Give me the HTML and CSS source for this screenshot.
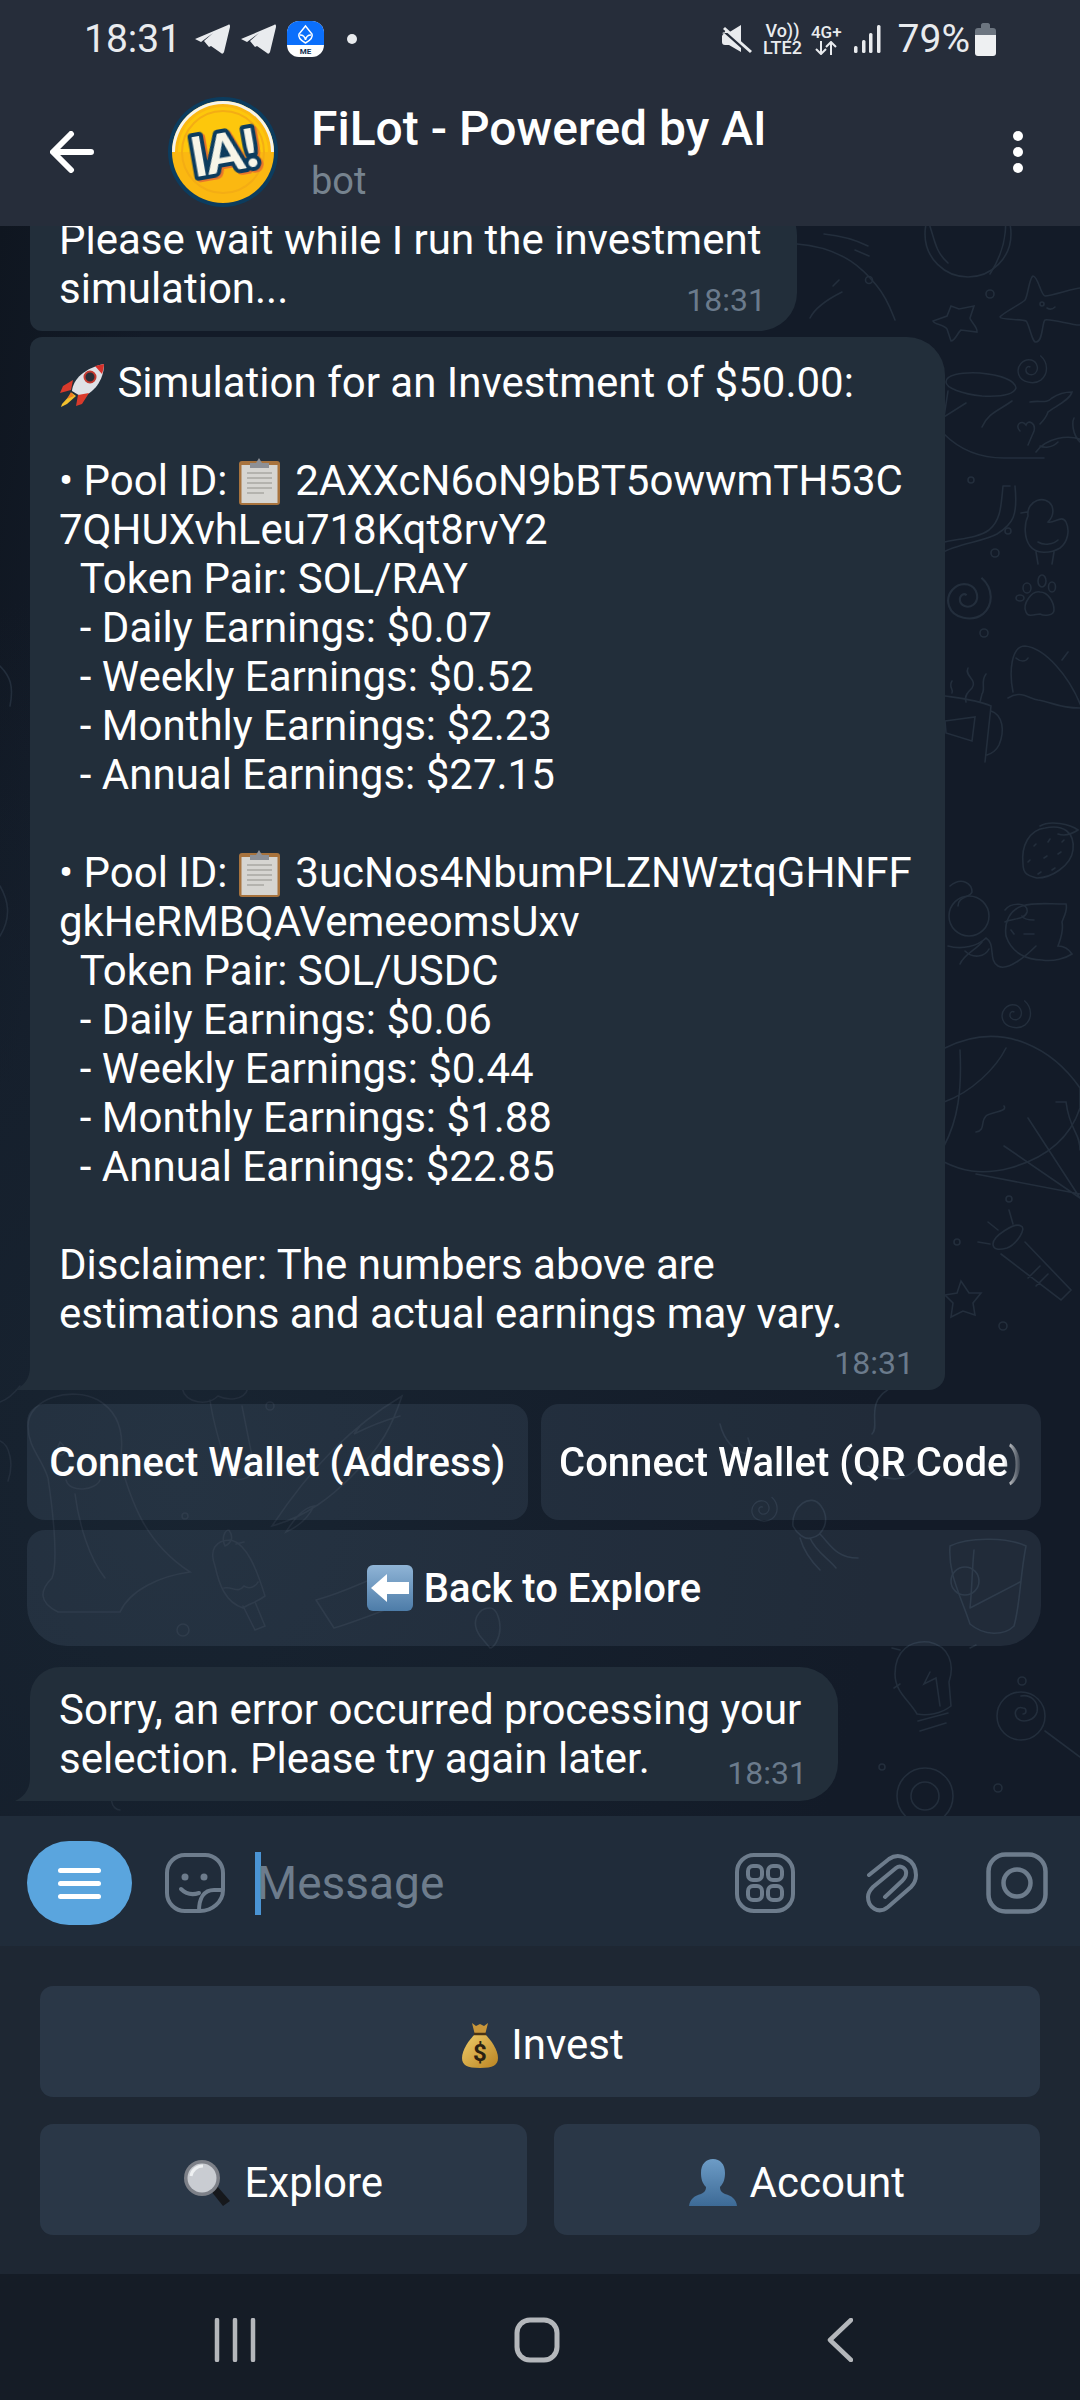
FILE: index.html
```html
<!DOCTYPE html>
<html lang="en">
<head>
    <meta charset="UTF-8">
    <meta name="viewport" content="width=device-width, initial-scale=1.0">
    <title>FiLot - Powered by AI</title>
    <link rel="stylesheet" href="styles.css">
</head>
<body>

    <!-- shared pictures -->
    <svg class="defs" width="0" height="0" aria-hidden="true">
        <defs>
            <linearGradient id="blue-key" x1="0" y1="0" x2="0" y2="1">
                <stop offset="0" stop-color="#8fb4d6"/>
                <stop offset="1" stop-color="#4d7ca8"/>
            </linearGradient>
            <linearGradient id="bust" x1="0" y1="0" x2="0" y2="1">
                <stop offset="0" stop-color="#6d9cc6"/>
                <stop offset="1" stop-color="#3d6a96"/>
            </linearGradient>
            <linearGradient id="bag" x1="0" y1="0" x2="1" y2="1">
                <stop offset="0" stop-color="#f0cd6a"/>
                <stop offset="1" stop-color="#b98322"/>
            </linearGradient>
            <symbol id="clipboard" viewBox="0 0 43 48">
                <rect x="1" y="4" width="41" height="44" rx="3" fill="#a8733d"/>
                <rect x="3.500" y="8" width="36" height="38" fill="#d6d5d1"/>
                <path d="M9 16h25M9 21h25M9 26h25M9 31h25M9 36h17" stroke="#a9a8a3" stroke-width="1.5"/>
                <path d="M12 11V6h6l3-5 3 5h7v5z" fill="#8d9096"/>
            </symbol>
            <symbol id="spiral" viewBox="0 0 40 40">
                <path d="M27 5c9 8 9 20 1 27-8 6-22 3-25-6-3-9 5-18 14-16 7 2 9 11 4 15-4 3-10 1-10-4 0-3 3-5 5-3" fill="none" stroke="currentColor" stroke-width="1.6"/>
            </symbol>
        </defs>
    </svg>

    <header class="top-bar">
        <div class="status-bar">
            <div class="status-left">
                <span class="clock">18:31</span>
                <svg class="plane" viewBox="0 0 35 30"><path d="M0 15 33 1c2-1 2 0 2 2l-6 25c-1 2-2 2-3 1l-10-7-2 1-5-6 9-8-12 9z" fill="#e9ebee"/></svg>
                <svg class="plane" viewBox="0 0 35 30"><path d="M0 15 33 1c2-1 2 0 2 2l-6 25c-1 2-2 2-3 1l-10-7-2 1-5-6 9-8-12 9z" fill="#e9ebee"/></svg>
                <svg class="app-badge" viewBox="0 0 37 36">
                    <rect width="37" height="36" rx="12" fill="#fff"/>
                    <path d="M0 24V12A12 12 0 0 1 12 0h13a12 12 0 0 1 12 12v12z" fill="#0b6ffb"/>
                    <path d="M18.500 5 25 13c1 3-1 6-6.500 9C13 19 11 16 12 13zM13 14c3 0 5 2 5.500 5 .5-3 2.500-5 5.500-5" fill="none" stroke="#fff" stroke-width="1.500"/>
                    <text x="18.500" y="33" class="badge-text">ME</text>
                </svg>
                <span class="status-dot"></span>
            </div>
            <div class="status-right">
                <svg class="mute" viewBox="0 0 30 30"><path d="M0 12c0-2 1-3 3-3h3L19 1v19L4 6z M0 12v6c0 2 1 3 3 3h4l12 7v-4L1 8z" fill="#e9ebee"/><path d="M2 4 29 28" stroke="#e9ebee" stroke-width="3"/></svg>
                <div class="net-text">
                    <span>Vo))</span>
                    <span>LTE2</span>
                </div>
                <div class="net-text net-small">
                    <span>4G+</span>
                    <svg class="arrows" viewBox="0 0 24 14"><path d="M7 0v13M2 8l5 5 5-5M17 14V1M12 6l5-5 5 5" fill="none" stroke="#e9ebee" stroke-width="2"/></svg>
                </div>
                <svg class="signal" viewBox="0 0 27 28">
                    <rect x="0" y="21" width="3.500" height="7" rx="1.500" fill="#e9ebee"/>
                    <rect x="8" y="15" width="3.500" height="13" rx="1.500" fill="#e9ebee"/>
                    <rect x="15" y="8" width="3.500" height="20" rx="1.500" fill="#e9ebee"/>
                    <rect x="23" y="0" width="3.500" height="28" rx="1.500" fill="#e9ebee"/>
                </svg>
                <span class="battery-text">79%</span>
                <svg class="battery" viewBox="0 0 21 33">
                    <path d="M0 13V8c0-2 1-3 3-3h3V2c0-1 1-2 2-2h5c1 0 2 1 2 2v3h3c2 0 3 1 3 3v5z" fill="#6c7580"/>
                    <path d="M0 12h21v18c0 2-1 3-3 3H3c-2 0-3-1-3-3z" fill="#eef0f2"/>
                </svg>
            </div>
        </div>
        <div class="toolbar">
            <svg class="back-arrow" viewBox="0 0 44 42"><path d="M41 21H4M21 3 3 21l18 18" fill="none" stroke="#fff" stroke-width="6" stroke-linecap="round" stroke-linejoin="round"/></svg>
            <svg class="avatar" viewBox="0 0 110 110">
                <circle cx="55" cy="55" r="55" fill="#0c3c5e"/>
                <circle cx="55" cy="55" r="51" fill="#fbb811"/>
                <path d="M4 55a51 51 0 0 1 102 0h-3a48 48 0 0 0-96 0z" fill="#f6f4ea"/>
                <path d="M10 55a45 45 0 0 1 90 0z" fill="#fdc70c"/>
                <circle cx="55" cy="55" r="41" fill="none" stroke="#f4ad14" stroke-width="2"/>
                <text x="57" y="75" class="avatar-text" transform="rotate(-10 55 55)">lA!</text>
            </svg>
            <div class="chat-title">
                <span class="chat-name">FiLot - Powered by AI</span>
                <span class="chat-sub">bot</span>
            </div>
            <div class="more-dots"><span></span><span></span><span></span></div>
        </div>
    </header>

    <main class="chat">
        <!-- wallpaper doodles, y is relative to the chat area -->
        <svg class="doodles" viewBox="0 0 1080 1590" aria-hidden="true">
            <g fill="none" stroke="currentColor" stroke-width="1.600" stroke-linecap="round">
                <!-- top right -->
                <circle cx="968" cy="8" r="43"/>
                <path d="M928 -5c6 14 6 30 20 42M998 -30c12 20 10 50-8 78"/>
                <path d="M797 18c50 4 70 30 80 42 10 12 14 24 18 34M824 8c20 2 32 6 44 12M855 24l14 6M810 92c6-12 20-20 32-26M833 60l6-6"/>
                <circle cx="869" cy="54" r="3.500"/><circle cx="990" cy="68" r="4"/>
                <path d="M1033 50c5 0 8 20 12 20 6 0 30-8 35-8M1033 50c-4 2-5 20-8 24-4 4-24 14-25 17 0 3 22 2 26 4 3 2 6 22 10 21 7 0 6-20 9-22 4-2 30 6 35 5"/>
                <circle cx="1042" cy="78" r="2"/><path d="M1047 82c3 2 6 1 8-1"/>
                <path d="M951 80l-4 10-14 5c0 3 12 4 14 8l4 12c4 0 7-9 10-11l16 2c1-5-7-11-7-14l4-12-15 3z"/>
                <!-- bowl and crab -->
                <path d="M946 156c0 6 16 12 36 14 20 1 32-2 34-8-1-8-16-13-36-15-20-1-34 2-34 9zM948 165l-4 26 22-14M1012 175c-14 10-24 12-30 26M944 208c14 14 34 24 60 24h40M1030 176c10-2 16 2 22-4 6-4 12-6 20-6-2 8-16 14-24 20-2 6-6 10-8 12"/>
                <path d="M1036 226c10-14 32-18 46-12M1020 205c-6-6 2-12 6-6 2-6 10-2 8 6l-6 14M1080 216c-8-8-8-20-6-24"/>
                <path d="M1040 220c4 2 12 2 18-4"/>
                <circle cx="971" cy="254" r="3"/><circle cx="1008" cy="305" r="3"/><circle cx="995" cy="327" r="4"/>
                <path d="M1003 260c-2 20-2 34-14 44-14 10-36 8-60 16M1010 260h-7M1015 260c3 30-2 38-18 48-14 8-44 10-60 22"/>
                <!-- duck -->
                <path d="M1028 290c-2-16 18-22 24-10 2 6 0 12-4 16 6 2 14-8 18 0 4 8 2 20-6 26-10 6-24 6-30-2-6-8-6-22-2-30zM1027 286l-6 1M1038 316c6 4 16 2 20-2M1036 326l2 12M1054 326l-2 12"/>
                <!-- paw -->
                <path d="M1026 386c-4-8 6-22 14-20 8 0 14 10 14 18 0 6-10 6-14 4-4 0-12 4-14-2z"/>
                <ellipse cx="1027" cy="362" rx="4" ry="5"/><ellipse cx="1042" cy="355" rx="4" ry="6"/><ellipse cx="1052" cy="361" rx="3.500" ry="5"/><ellipse cx="1020" cy="372" rx="4" ry="3"/>
                <circle cx="984" cy="407" r="4"/>
                <!-- whale -->
                <path d="M1013 466c-4-20-2-46 12-46 20 2 44 30 56 60M1008 472c12-8 20 0 30 2 14 2 20 8 42 8M1016 432c4 4 10 4 12 0M1062 434l6-8"/>
                <!-- steam and mug -->
                <path d="M968 442c-4 8 10 12 4 20-4 4-8 8-6 14M986 448c-6 8 0 14-4 20l-2 8M952 455c-4 6 2 8 0 12"/>
                <path d="M945 470c14 2 32 4 46 10l-6 56M991 485c12 4 14 20 8 34-2 4-6 8-12 10M945 495l30-4-3 24-26-8z"/>
                <!-- strawberry -->
                <path d="M1045 602c18-4 30 4 28 22-2 16-22 28-36 28-6-2-14-2-14-14-2-18 6-34 22-36zM1040 600c10-6 30-2 38 4-6 4-14 6-20 4"/>
                <path d="M1034 620l2-2M1048 616l2-3M1062 616l2-2M1028 636l2-2M1044 632l3-2M1058 628l3-2M1038 648l3-2M1052 644l3-2"/>
                <!-- cat -->
                <path d="M950 660c12-10 22-2 22 6-2 6-14 4-14 14M948 720c14 4 30 0 38-8 10 6 2 22 12 28 10 6 30-12 38-20M1006 710c-2-14 4-26 16-30 14-4 24-2 44-2 2 6-2 12-4 18 2 10-2 18-4 24 4 0 10 2 14 8-6 4-18 8-30 6-14 0-30-6-36-24z"/>
                <circle cx="969" cy="690" r="20"/>
                <path d="M1005 684c6-8 24-8 22 2-2 8-14 6-22 10M960 738c4-10 16-14 22-22M965 725c8 8 20 6 24-2"/>
                <path d="M1014 708l-3-4M1022 690c2 4 8 4 12 4M1024 708h10"/>
                <!-- balloon -->
                <path d="M945 822c60-30 110 4 135 40v20c-10 30-34 50-70 60-30 8-50 2-66-6"/>
                <path d="M960 824c2 40-2 70-16 96M1006 822c-10 20-34 44-62 54M1004 880c4 6-14 6-18 10-6 6 0 14-10 16M1056 876l10 0c4 30 14 30 14 48M1028 892l52 80M1004 920l76 52M976 948l104 20"/>
                <!-- telescope -->
                <path d="M993 1018c0-8 22-22 28-18 6 2-4 18-14 22-8 2-14 2-14-4zM1001 1028l60 46 10-10-46-48M1040 1040l-12 12M1048 1048l-12 12"/>
                <path d="M1009 984l4 14M988 996l10 8M978 1016l12 2"/>
                <circle cx="1009" cy="973" r="3"/><circle cx="957" cy="1016" r="3"/>
                <path d="M961 1055l-4 12-12 2 8 8-2 14 12-6 12 4-2-12 8-10-12 0z"/>
                <circle cx="1003" cy="1100" r="4"/>
                <!-- dino, behind the first wallet button -->
                <path d="M28 1200c0-28 44-40 70-26 24 14 26 40 22 62 12 40 24 80 70 110-30 4-60 18-70 40-20 0-40 0-62 0-20-10-18-22-6-34 6-14 2-60-4-100-6-20-20-30-20-52zM60 1216c10 8 2 18-4 10zM100 1254c-4 10-30 14-34 0M75 1268c4 30 14 64 30 84"/>
                <path d="M182 1162c-6-16 20-24 28-10 14-14 40-4 38 10-4 14-22 12-30 8-10 10-32 8-36-8zM210 1174c4 30 16 62 20 76 10 8 26 0 24-10l-12-60"/>
                <path d="M272 1300c40-60 80-100 130-130-10 30-20 50-50 80-20 20-44 40-80 50zM286 1306c10-16 18-24 28-26-6 12-14 20-28 26zM360 1200l-6 8c16-8 32-14 46-18"/>
                <!-- popsicle and envelope -->
                <path d="M215 1340c-6-16 0-26 16-26 16 4 26 30 34 56-8 6-16 8-22 12-18-6-24-24-28-42zM243 1380l12 24 10-4-10-24M224 1362c8-2 14 6 20-2 6 4 12 0 14-4"/>
                <path d="M316 1374c30-8 50-20 70-26M316 1374l18 28c20-6 40-14 56-20"/>
                <path d="M225 1320c-4-8 0-16 4-16 4 6 4 12-4 16zM236 1318l8-2M480 1410c-10-14-2-28 10-28 6 0 10 10 10 20 0 10-6 20-10 20z"/>
                <circle cx="183" cy="1404" r="6"/><circle cx="185" cy="1290" r="3"/><circle cx="270" cy="1180" r="4"/>
                <!-- right of the buttons -->
                <path d="M793 1300c-2-20 18-34 28-20 10 14 2 30-10 32-6 2-14-4-18-12zM800 1312c4 14 12 24 20 32M810 1312c6 14 18 20 26 30M820 1308c10 10 16 24 38 24"/>
                <path d="M950 1320c20-10 60-8 76 0-6 30-6 60-12 80-10 10-30 10-44-2-10-30-22-50-20-78zM970 1382l50-26M974 1324c-2 20-2 40-4 58"/>
                <circle cx="965" cy="1355" r="14"/>
                <path d="M906 1148c-10 14-26 16-30 30-4 14 2 24-4 30M935 1145c-10 0-16 12-6 18M868 1240c20 20 40 14 50 0"/>
                <path d="M720 1198c4 16 14 28 28 30 4-4 2-10 0-16"/>
                <!-- bulb and lollipop -->
                <path d="M917 1488c-8-14-22-22-22-40 0-24 16-34 34-32 20 4 26 22 20 40l2 24c-10 8-24 10-34 8zM918 1495l30-8M920 1505l26-8M930 1446l-6 12 12-6 4 28"/>
                <path d="M900 1424l-8-2M900 1458l-6 4M970 1422l6-3"/>
                <circle cx="1021" cy="1490" r="24"/>
                <path d="M1021 1470c10-2 18 6 16 16-2 8-14 12-20 6-4-6 0-12 6-10 4 0 4 6 0 6M1045 1505l35 26"/>
                <circle cx="925" cy="1570" r="28"/><circle cx="925" cy="1570" r="14"/>
                <circle cx="1022" cy="1455" r="4"/><circle cx="882" cy="1541" r="3"/><circle cx="998" cy="1562" r="4"/>
                <!-- left edge -->
                <path d="M0 1215c10 4 14 24 8 40M20 1160c-8 10-14 14-20 16M0 660c8 14 12 30 0 50M0 440c10 10 14 20 10 40"/>
                <path d="M120 1560c-14 10-8 24 0 24M50 1490c14 0 22 16 12 26-8 8-16 0-12-6"/>
            </g>
            <use href="#spiral" x="1016" y="125" width="36" height="36"/>
            <use href="#spiral" x="945" y="345" width="54" height="54"/>
            <use href="#spiral" x="1000" y="770" width="36" height="36"/>
            <use href="#spiral" x="750" y="1265" width="32" height="36"/>
            <use href="#spiral" x="40" y="1445" width="30" height="34"/>
        </svg>

        <div class="bubble bubble-wait">
            <p class="msg-text">Please wait while I run the investment
simulation...</p>
            <span class="msg-time">18:31</span>
        </div>

        <div class="bubble bubble-sim has-tail">
            <p class="msg-text"><svg class="emoji rocket" viewBox="0 0 47 44">
                <path d="M13 28C14 16 26 5 45 1c0 17-11 29-22 33z" fill="#dfe1e6"/>
                <path d="M36 3 45 1c0 3-1 7-2 10z" fill="#d6302a"/>
                <circle cx="31" cy="14" r="5.500" fill="#2b2f38" stroke="#c43a30" stroke-width="2"/>
                <path d="M14 17 4 23l-3 7 11-3zM30 30l-7 11-6 2 2-11z" fill="#d93a2b"/>
                <path d="M13 30 3 41l-1 3 6-3 9-8z" fill="#f3c12e"/>
                <path d="M12 29 8 36l7-3z" fill="#ef7d22"/>
            </svg> Simulation for an Investment of $50.00:

• Pool ID: <svg class="emoji clip"><use href="#clipboard"/></svg> 2AXXcN6oN9bBT5owwmTH53C
7QHUXvhLeu718Kqt8rvY2
  Token Pair: SOL/RAY
  - Daily Earnings: $0.07
  - Weekly Earnings: $0.52
  - Monthly Earnings: $2.23
  - Annual Earnings: $27.15

• Pool ID: <svg class="emoji clip"><use href="#clipboard"/></svg> 3ucNos4NbumPLZNWztqGHNFF
gkHeRMBQAVemeeomsUxv
  Token Pair: SOL/USDC
  - Daily Earnings: $0.06
  - Weekly Earnings: $0.44
  - Monthly Earnings: $1.88
  - Annual Earnings: $22.85

Disclaimer: The numbers above are
estimations and actual earnings may vary.</p>
            <span class="msg-time">18:31</span>
        </div>

        <div class="inline-keys">
            <div class="key-row">
                <button class="inline-key">Connect Wallet (Address)</button>
                <button class="inline-key"><span class="fade-label">Connect Wallet (QR Code)</span></button>
            </div>
            <div class="key-row">
                <button class="inline-key key-bottom">
                    <svg class="emoji-key" viewBox="0 0 46 46">
                        <rect width="46" height="46" rx="6" fill="url(#blue-key)"/>
                        <path d="M4 23 20 9v8h22v12H20v8z" fill="#fff"/>
                    </svg>
                    Back to Explore
                </button>
            </div>
        </div>

        <div class="bubble bubble-error has-tail">
            <p class="msg-text">Sorry, an error occurred processing your
selection. Please try again later.</p>
            <span class="msg-time">18:31</span>
        </div>
    </main>

    <section class="composer">
        <button class="menu-pill"><span></span><span></span><span></span></button>
        <svg class="sticker-icon" viewBox="0 0 62 62">
            <path d="M21 3h20a18 18 0 0 1 18 18v17c0 12-11 21-23 21H21A18 18 0 0 1 3 41V21A18 18 0 0 1 21 3zM59 38H50C40 38 35 46 35 59M17 37c5 5 12 6 18 4" fill="none" stroke="#6d7c8c" stroke-width="4" stroke-linecap="round"/>
            <circle cx="21" cy="25" r="3.500" fill="#6d7c8c"/>
            <circle cx="40" cy="25" r="3.500" fill="#6d7c8c"/>
        </svg>
        <div class="msg-input"><span class="caret"></span><span class="placeholder">Message</span></div>
        <svg class="tool-icon" viewBox="0 0 60 60">
            <rect x="2" y="2" width="56" height="56" rx="17" fill="none" stroke="#6d7c8c" stroke-width="4"/>
            <g fill="none" stroke="#6d7c8c" stroke-width="4">
                <rect x="13" y="13" width="14" height="14" rx="5"/>
                <rect x="33" y="13" width="14" height="14" rx="5"/>
                <rect x="13" y="33" width="14" height="14" rx="5"/>
                <rect x="33" y="33" width="14" height="14" rx="5"/>
            </g>
        </svg>
        <svg class="tool-icon clip-icon" viewBox="0 0 52 60">
            <path d="M3 22 23 6C33-1 50 6 50 22c0 6-2 9-5 12L22 54C12 62 2 54 2 44c0-4 2-7 5-10L30 15c5-4 11 1 10 6 0 3-2 5-4 7L19 44" fill="none" stroke="#6d7c8c" stroke-width="4" stroke-linecap="round"/>
        </svg>
        <svg class="tool-icon camera-icon" viewBox="0 0 62 62">
            <rect x="2.500" y="2.500" width="57" height="57" rx="17" fill="none" stroke="#6d7c8c" stroke-width="4.500"/>
            <circle cx="31" cy="31" r="13.500" fill="none" stroke="#6d7c8c" stroke-width="4.500"/>
        </svg>
    </section>

    <section class="keyboard">
        <button class="bot-key key-invest">
            <svg class="emoji-bag" viewBox="0 0 36 46">
                <path d="M10 1l4 3 4-2 4 2 4-3-3 12H13z" fill="#c9963a"/>
                <path d="M13 12h10c6 6 13 16 13 24 0 7-5 10-18 10S0 43 0 36c0-8 7-18 13-24z" fill="url(#bag)"/>
                <path d="M12 12h12" stroke="#4a3414" stroke-width="2.500"/>
                <text x="18" y="39" class="bag-text">$</text>
            </svg>
            Invest
        </button>
        <div class="key-row-bot">
            <button class="bot-key">
                <svg class="emoji-big" viewBox="0 0 48 48">
                    <path d="M28 32 40 47l7-5-13-15z" fill="#16181c"/>
                    <circle cx="19" cy="19" r="18" fill="#7d8088"/>
                    <circle cx="19" cy="19" r="14.500" fill="#c9ccd2"/>
                    <path d="M8 17c1-6 6-10 12-10" fill="none" stroke="#eef0f2" stroke-width="3"/>
                </svg>
                Explore
            </button>
            <button class="bot-key">
                <svg class="emoji-big" viewBox="0 0 48 48">
                    <path d="M0 47c1-7 5-10 12-12 4-2 5-4 5-7-4-4-5-9-5-14C12 5 17 0 24 0s12 5 12 14c0 5-1 10-5 14 0 3 1 5 5 7 7 2 11 5 12 12z" fill="url(#bust)"/>
                </svg>
                Account
            </button>
        </div>
    </section>

    <nav class="nav-bar">
        <svg class="nav-recent" viewBox="0 0 42 44"><path d="M3 2v40M21 2v40M39 2v40" stroke="#b4b7bb" stroke-width="4.500" stroke-linecap="round"/></svg>
        <svg class="nav-home" viewBox="0 0 46 46"><rect x="3" y="3" width="40" height="40" rx="13" fill="none" stroke="#b4b7bb" stroke-width="5"/></svg>
        <svg class="nav-back" viewBox="0 0 26 44"><path d="M24 2 3 22l21 20" fill="none" stroke="#b4b7bb" stroke-width="4.500" stroke-linecap="round" stroke-linejoin="round"/></svg>
    </nav>

</body>
</html>
```

FILE: styles.css
```css
html, body {
    margin: 0;
    height: 100%;
}

body {
    width: 1080px;
    height: 2400px;
    display: flex;
    flex-direction: column;
    overflow: hidden;
    font-family: 'Roboto', sans-serif;
    color: #ffffff;
    background-color: #151c26;
}

p {
    margin: 0;
}

button {
    border: none;
    color: #ffffff;
    font-family: inherit;
    cursor: pointer;
}

.defs {
    position: absolute;
}

/* header */

.top-bar {
    height: 226px;
    flex-shrink: 0;
    background-color: #262d3a;
    position: relative;
    z-index: 2;
}

.status-bar {
    height: 78px;
    padding: 0 84px 0 84px;
    display: flex;
    justify-content: space-between;
    align-items: center;
    color: #e9ebee;
}

.status-left, .status-right {
    display: flex;
    align-items: center;
}

.clock {
    font-size: 39px;
    margin-right: 14px;
}

.plane {
    width: 35px;
    height: 30px;
    margin-right: 11px;
}

.app-badge {
    width: 37px;
    height: 36px;
    margin-right: 23px;
}

.badge-text {
    font: 700 8px 'Roboto', sans-serif;
    text-anchor: middle;
    fill: #12304f;
}

.status-dot {
    width: 10px;
    height: 10px;
    border-radius: 50%;
    background-color: #e9ebee;
}

.mute {
    width: 30px;
    height: 30px;
    margin-right: 11px;
}

.net-text {
    display: flex;
    flex-direction: column;
    align-items: center;
    font-size: 18px;
    font-weight: 500;
    line-height: 17px;
    margin-right: 9px;
}

.net-small {
    font-size: 17px;
    margin-right: 12px;
}

.arrows {
    width: 24px;
    height: 14px;
}

.signal {
    width: 27px;
    height: 28px;
    margin-right: 17px;
}

.battery-text {
    font-size: 39px;
    margin-right: 5px;
}

.battery {
    width: 21px;
    height: 33px;
}

.toolbar {
    height: 148px;
    padding: 0 57px 0 50px;
    display: flex;
    align-items: center;
}

.back-arrow {
    width: 44px;
    height: 42px;
    margin-right: 74px;
}

.avatar {
    width: 110px;
    height: 110px;
    margin-right: 33px;
}

.avatar-text {
    font: 900 54px 'Lato', sans-serif;
    text-anchor: middle;
    fill: #f7f5e8;
    stroke: #0c3c5e;
    stroke-width: 8px;
    stroke-linejoin: round;
    paint-order: stroke;
    filter: drop-shadow(2px 2px 0 #e8762a);
}

.chat-title {
    display: flex;
    flex-direction: column;
}

.chat-name {
    font-size: 48px;
    font-weight: 500;
    line-height: 54px;
}

.chat-sub {
    font-size: 38px;
    line-height: 44px;
    color: #76838f;
    padding-top: 3px;
}

.more-dots {
    margin-left: auto;
    display: flex;
    flex-direction: column;
    gap: 6px;
}

.more-dots span {
    width: 10px;
    height: 10px;
    border-radius: 50%;
    background-color: #ffffff;
}

/* chat */

.chat {
    flex: 1;
    min-height: 0;
    position: relative;
    overflow: hidden;
    display: flex;
    flex-direction: column;
    justify-content: flex-end;
    align-items: flex-start;
    padding: 0 0 15px 30px;
    background:
        radial-gradient(ellipse 700px 900px at 180px 1250px, #182431 0%, rgba(24, 36, 49, 0) 100%),
        linear-gradient(100deg, #0f1620 0%, #131b28 12%, #131b28 100%);
}

.doodles {
    position: absolute;
    left: 0;
    top: 0;
    width: 1080px;
    height: 1590px;
    color: #232e3c;
}

.bubble {
    position: relative;
    flex-shrink: 0;
    background-color: #222e3a;
    border-radius: 12px 38px 38px 12px;
    color: #ffffff;
}

.msg-text {
    font-size: 42px;
    line-height: 49px;
    white-space: pre-wrap;
    padding: 18px 29px;
}

.msg-time {
    position: absolute;
    font-size: 32px;
    line-height: 36px;
    color: #6b7b8c;
    right: 31px;
    bottom: 13px;
}

.has-tail::before {
    content: "";
    position: absolute;
    left: -15px;
    bottom: 0;
    width: 28px;
    height: 34px;
    background-color: #222e3a;
    clip-path: path("M15 0 V10 C15 24 8 30 0 34 H28 V0 Z");
}

.bubble-wait {
    width: 767px;
    margin-bottom: 6px;
}

.bubble-sim {
    width: 915px;
    margin-bottom: 14px;
    border-radius: 12px 38px 16px 0;
}

.bubble-sim .msg-text {
    padding-top: 21px;
    padding-bottom: 52px;
}

.bubble-sim .msg-time {
    bottom: 9px;
}

.bubble-error {
    width: 808px;
    border-radius: 30px 38px 38px 0;
}

.bubble-error .msg-time {
    bottom: 10px;
}

.emoji {
    vertical-align: -10px;
}

.rocket {
    width: 47px;
    height: 44px;
    margin-right: 1px;
}

.clip {
    width: 43px;
    height: 48px;
    margin-right: 4px;
    vertical-align: -10px;
}

.inline-keys {
    position: relative;
    flex-shrink: 0;
    margin: 0 0 21px -3px;
    width: 1014px;
    display: flex;
    flex-direction: column;
    gap: 10px;
}

.key-row {
    display: flex;
    gap: 13px;
}

.inline-key {
    flex: 1;
    min-width: 0;
    height: 116px;
    padding: 0 20px;
    background-color: rgba(160, 190, 220, 0.1);
    border-radius: 18px;
    font-size: 40px;
    font-weight: 500;
    display: flex;
    align-items: center;
    justify-content: center;
    white-space: nowrap;
}

.key-bottom {
    border-radius: 18px 18px 40px 40px;
    gap: 11px;
}

.emoji-key {
    width: 46px;
    height: 46px;
}

.fade-label {
    -webkit-mask-image: linear-gradient(to right, #000 96%, transparent 100%);
    mask-image: linear-gradient(to right, #000 96%, transparent 100%);
}

/* composer */

.composer {
    height: 130px;
    box-sizing: border-box;
    flex-shrink: 0;
    display: flex;
    align-items: center;
    padding: 4px 32px 0 27px;
    background-color: #202c3a;
    position: relative;
}

.menu-pill {
    width: 105px;
    height: 84px;
    border-radius: 42px;
    background-color: #5aa5de;
    display: flex;
    flex-direction: column;
    align-items: center;
    justify-content: center;
    gap: 8px;
    margin-right: 32px;
    padding: 0;
}

.menu-pill span {
    width: 43px;
    height: 5px;
    border-radius: 3px;
    background-color: #ffffff;
}

.sticker-icon {
    width: 62px;
    height: 62px;
    margin-right: 29px;
}

.msg-input {
    flex: 1;
    display: flex;
    align-items: center;
}

.caret {
    width: 6px;
    height: 63px;
    background-color: #4a94d4;
}

.placeholder {
    font-size: 46px;
    color: #6d7c8c;
    margin-left: -4px;
}

.tool-icon {
    width: 60px;
    height: 60px;
    margin-right: 71px;
}

.clip-icon {
    width: 52px;
    margin-right: 68px;
}

.camera-icon {
    width: 62px;
    height: 62px;
    margin-right: 0;
}

/* bottom keyboard */

.keyboard {
    height: 328px;
    box-sizing: border-box;
    flex-shrink: 0;
    display: flex;
    flex-direction: column;
    gap: 27px;
    padding: 40px 40px 39px;
    background-color: #1e2733;
}

.key-row-bot {
    display: flex;
    gap: 27px;
}

.bot-key {
    flex: 1;
    height: 111px;
    background-color: #2a3747;
    border-radius: 13px;
    font-size: 42px;
    display: flex;
    align-items: center;
    justify-content: center;
    gap: 13px;
    padding: 6px 0 0;
}

.key-invest {
    flex: none;
    padding-left: 6px;
}

.emoji-bag {
    width: 36px;
    height: 46px;
}

.bag-text {
    font: 700 24px 'Roboto', sans-serif;
    text-anchor: middle;
    fill: #2a2112;
}

.emoji-big {
    width: 48px;
    height: 48px;
}

/* android nav */

.nav-bar {
    height: 126px;
    box-sizing: border-box;
    flex-shrink: 0;
    display: flex;
    align-items: center;
    padding: 6px 0 0 214px;
}

.nav-recent {
    width: 42px;
    height: 44px;
    margin-right: 258px;
}

.nav-home {
    width: 46px;
    height: 46px;
    margin-right: 267px;
}

.nav-back {
    width: 26px;
    height: 44px;
}
```
